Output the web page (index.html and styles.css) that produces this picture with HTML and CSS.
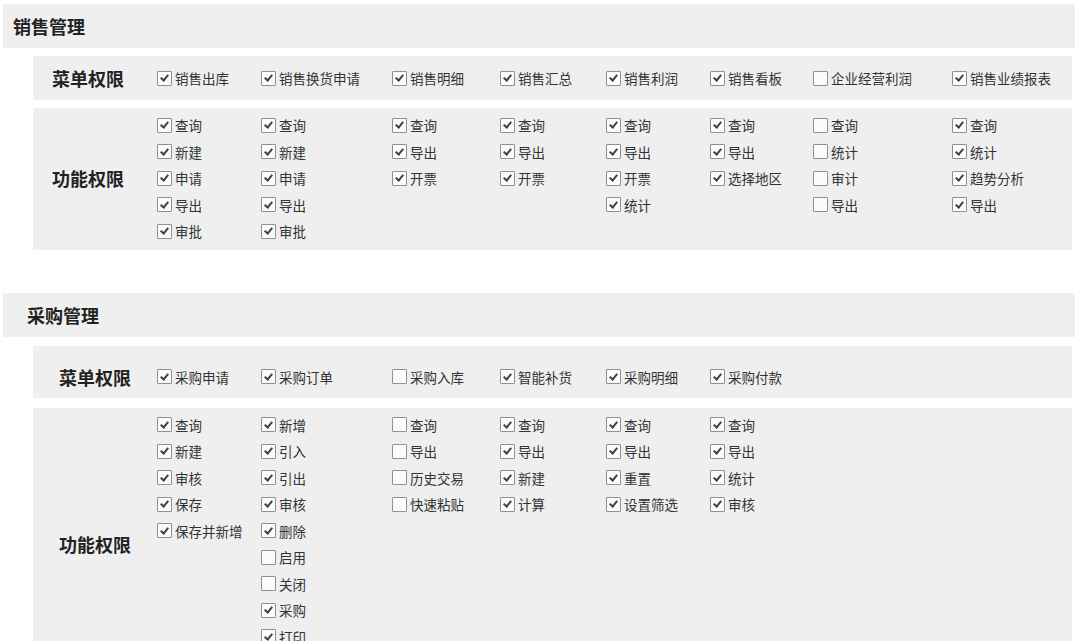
FILE: index.html
```html
<!DOCTYPE html>
<html lang="zh-CN">
<head>
<meta charset="utf-8">
<title>权限设置</title>
<link rel="stylesheet" href="styles.css">
</head>
<body>
<div class="page">
  <section class="module module-sales">
    <div class="module-title">销售管理</div>
    <div class="perm-row menu-row">
      <div class="perm-label">菜单权限</div>
      <div class="col"><span class="cb on">销售出库</span></div>
      <div class="col"><span class="cb on">销售换货申请</span></div>
      <div class="col"><span class="cb on">销售明细</span></div>
      <div class="col"><span class="cb on">销售汇总</span></div>
      <div class="col"><span class="cb on">销售利润</span></div>
      <div class="col"><span class="cb on">销售看板</span></div>
      <div class="col"><span class="cb">企业经营利润</span></div>
      <div class="col"><span class="cb on">销售业绩报表</span></div>
    </div>
    <div class="perm-row func-row">
      <div class="perm-label">功能权限</div>
      <div class="col">
        <span class="cb on">查询</span><span class="cb on">新建</span><span class="cb on">申请</span><span class="cb on">导出</span><span class="cb on">审批</span>
      </div>
      <div class="col">
        <span class="cb on">查询</span><span class="cb on">新建</span><span class="cb on">申请</span><span class="cb on">导出</span><span class="cb on">审批</span>
      </div>
      <div class="col">
        <span class="cb on">查询</span><span class="cb on">导出</span><span class="cb on">开票</span>
      </div>
      <div class="col">
        <span class="cb on">查询</span><span class="cb on">导出</span><span class="cb on">开票</span>
      </div>
      <div class="col">
        <span class="cb on">查询</span><span class="cb on">导出</span><span class="cb on">开票</span><span class="cb on">统计</span>
      </div>
      <div class="col">
        <span class="cb on">查询</span><span class="cb on">导出</span><span class="cb on">选择地区</span>
      </div>
      <div class="col">
        <span class="cb">查询</span><span class="cb">统计</span><span class="cb">审计</span><span class="cb">导出</span>
      </div>
      <div class="col">
        <span class="cb on">查询</span><span class="cb on">统计</span><span class="cb on">趋势分析</span><span class="cb on">导出</span>
      </div>
    </div>
  </section>

  <section class="module module-purchase">
    <div class="module-title">采购管理</div>
    <div class="perm-row menu-row">
      <div class="perm-label">菜单权限</div>
      <div class="col"><span class="cb on">采购申请</span></div>
      <div class="col"><span class="cb on">采购订单</span></div>
      <div class="col"><span class="cb">采购入库</span></div>
      <div class="col"><span class="cb on">智能补货</span></div>
      <div class="col"><span class="cb on">采购明细</span></div>
      <div class="col"><span class="cb on">采购付款</span></div>
    </div>
    <div class="perm-row func-row">
      <div class="perm-label">功能权限</div>
      <div class="col">
        <span class="cb on">查询</span><span class="cb on">新建</span><span class="cb on">审核</span><span class="cb on">保存</span><span class="cb on">保存并新增</span>
      </div>
      <div class="col">
        <span class="cb on">新增</span><span class="cb on">引入</span><span class="cb on">引出</span><span class="cb on">审核</span><span class="cb on">删除</span><span class="cb">启用</span><span class="cb">关闭</span><span class="cb on">采购</span><span class="cb on">打印</span>
      </div>
      <div class="col">
        <span class="cb">查询</span><span class="cb">导出</span><span class="cb">历史交易</span><span class="cb">快速粘贴</span>
      </div>
      <div class="col">
        <span class="cb on">查询</span><span class="cb on">导出</span><span class="cb on">新建</span><span class="cb on">计算</span>
      </div>
      <div class="col">
        <span class="cb on">查询</span><span class="cb on">导出</span><span class="cb on">重置</span><span class="cb on">设置筛选</span>
      </div>
      <div class="col">
        <span class="cb on">查询</span><span class="cb on">导出</span><span class="cb on">统计</span><span class="cb on">审核</span>
      </div>
    </div>
  </section>
</div>
</body>
</html>
```

FILE: styles.css
```css
* { box-sizing: border-box; }

html, body {
  margin: 0;
  padding: 0;
  background: #ffffff;
}

body {
  font-family: "Noto Sans CJK SC", "Noto Sans", sans-serif;
  color: #333333;
}

.page {
  padding: 4px 5px 0 3px;
}

.module-title {
  height: 44px;
  display: flex;
  align-items: center;
  background: #efefef;
  font-size: 18px;
  font-weight: 700;
  color: #222222;
  padding-left: 10px;
}

.module-purchase {
  margin-top: 43px;
}

.module-purchase .module-title {
  padding-left: 24px;
}

.perm-row {
  display: grid;
  grid-template-columns: 124px 104px 131px 108px 106px 104px 103px 139px auto;
  background: #efefef;
  margin: 8px 3px 0 30px;
}

.perm-label {
  font-size: 18px;
  font-weight: 700;
  color: #222222;
  padding-left: 19px;
  align-self: center;
  white-space: nowrap;
}

.module-purchase .perm-label {
  padding-left: 26px;
}

.menu-row {
  min-height: 44px;
  align-items: center;
}

.module-purchase .menu-row {
  margin-top: 9px;
  min-height: 52px;
  padding-top: 10px;
}

.func-row {
  padding: 4px 0 5px;
  align-items: start;
}

.module-purchase .func-row {
  margin-top: 10px;
  padding-top: 4px;
  min-height: 274px;
}

.col {
  display: flex;
  flex-direction: column;
}

.cb {
  position: relative;
  display: flex;
  align-items: center;
  height: 26.5px;
  font-size: 13.5px;
  color: #333333;
  white-space: nowrap;
}

.cb::before {
  content: "";
  flex: none;
  width: 13px;
  height: 13px;
  margin-right: 3px;
  border: 1px solid #909090;
  border-radius: 1px;
  background: #fbfbfb;
}

.cb.on::after {
  content: "";
  position: absolute;
  left: 4.5px;
  top: 50%;
  width: 3px;
  height: 6px;
  border-right: 2px solid #404040;
  border-bottom: 2px solid #404040;
  transform: translateY(-62%) rotate(40deg);
}
```
